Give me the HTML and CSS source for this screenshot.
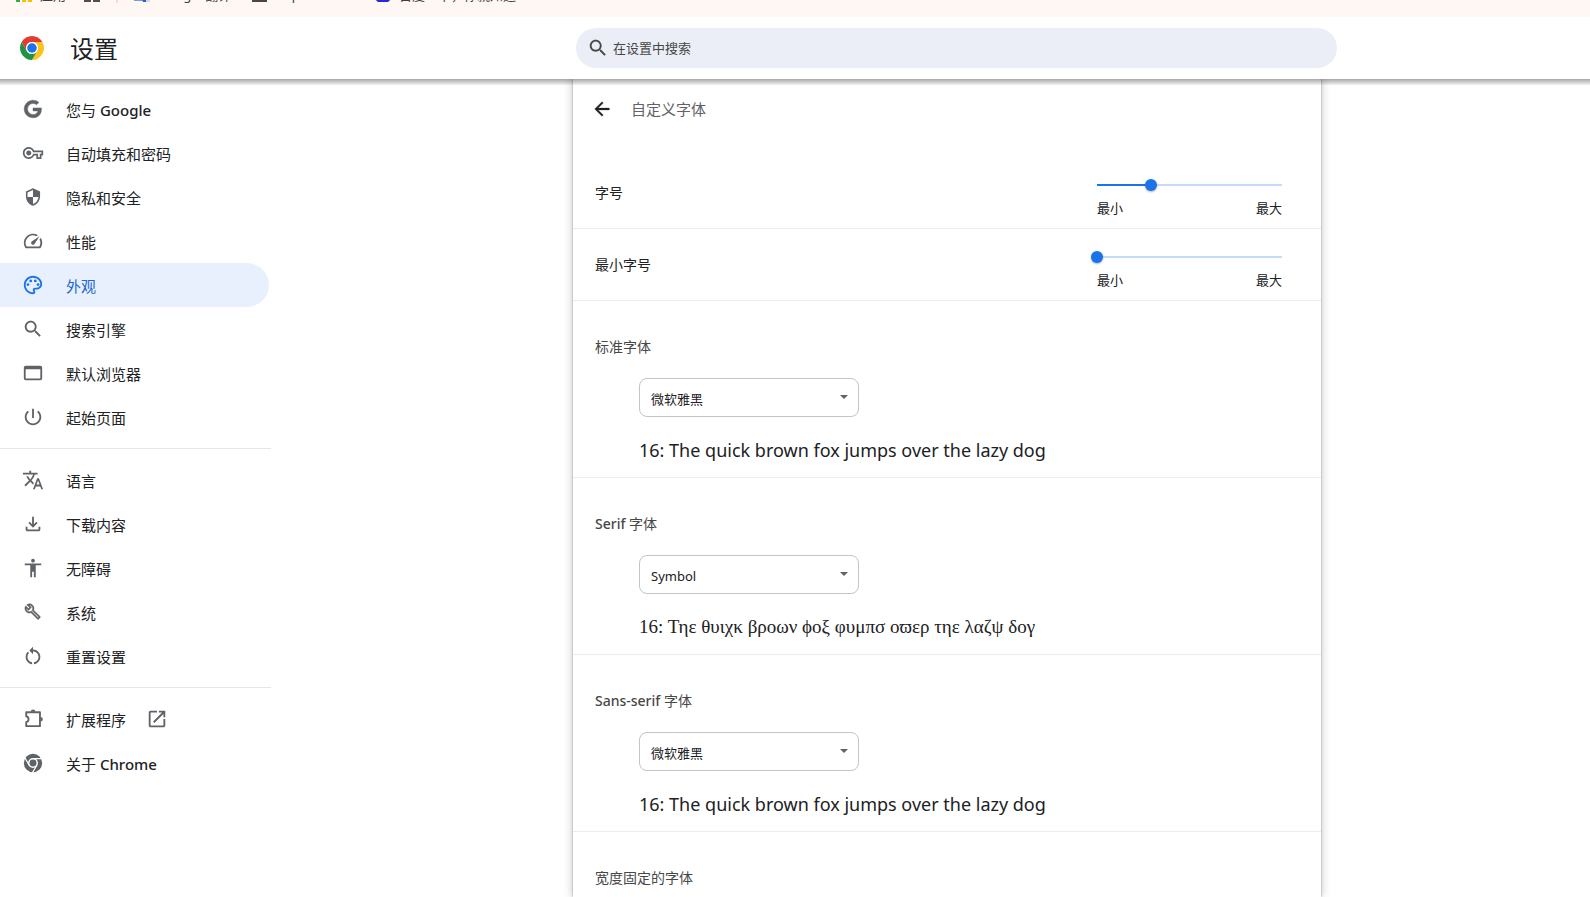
FILE: index.html
```html
<!DOCTYPE html>
<html lang="zh-CN">
<head>
<meta charset="utf-8">
<meta name="viewport" content="width=device-width, initial-scale=1">
<title>设置 - 自定义字体</title>
<link rel="stylesheet" href="styles.css">
</head>
<body>
<div class="bookmarks">
  <a class="bookmark" href="#apps"><svg class="bm-icon" viewBox="0 0 16 16"><path fill="#ea4335" d="M0 0h4v4H0zM6 0h4v4H6zM12 0h4v4h-4z"/><path fill="#4285f4" d="M0 6h4v4H0zM6 6h4v4H6z"/><path fill="#34a853" d="M0 12h4v4H0z"/><path fill="#fbbc04" d="M6 12h4v4H6zM12 12h4v4h-4z"/></svg>应用</a>
  <a class="bookmark bm-grid" href="#groups" aria-label="标签页分组"><svg class="bm-icon" viewBox="0 0 16 16"><path fill="none" stroke="#5b4b43" stroke-width="2" d="M1 1h5v5H1zM10 1h5v5h-5zM1 10h5v5H1zM10 10h5v5h-5z"/></svg></a>
  <span class="bm-rule"></span>
  <a class="bookmark bm-translate" href="#translate"><svg class="bm-icon" viewBox="0 0 16 16"><path fill="#d6d8dc" d="M6 4h10v12H9z"/><path fill="#6f9df2" d="M0 0h9l3 15H0z"/><path fill="#2b5fd0" d="M8 13h4v3H9z"/></svg>Google 翻译</a>
  <a class="bookmark bm-folder" href="#imported"><svg class="bm-icon" viewBox="0 0 16 16"><path fill="none" stroke="#474747" stroke-width="2" d="M2 3h5l2 2h6v10H2z"/></svg>Imported</a>
  <a class="bookmark bm-baidu" href="#baidu"><svg class="bm-icon" viewBox="0 0 16 16"><path fill="#2529d8" d="M8 7c4 0 7 4 7 6 0 3-4 4-7 3-3 1-7 0-7-3 0-2 3-6 7-6z"/><path fill="#fff" d="M4 12h3v2H4zM9 12h3v2H9z"/></svg>百度一下，你就知道</a>
</div>

<header class="topbar">
  <div class="brand">
    <svg class="logo" viewBox="0 0 48 48" aria-hidden="true"><path fill="#e33b2e" d="M24 12h20.78A24 24 0 0 0 3.22 12l10.39 18A12 12 0 0 1 24 12z"/><path fill="#fcc31e" d="M24 12h20.78A24 24 0 0 1 24 48l10.39-18A12 12 0 0 0 24 12z"/><path fill="#229342" d="M13.61 30L3.22 12A24 24 0 0 0 24 48l10.39-18A12 12 0 0 1 13.61 30z"/><circle cx="24" cy="24" r="12" fill="#fff"/><circle cx="24" cy="24" r="9.5" fill="#1a73e8"/></svg>
    <h1 class="title">设置</h1>
  </div>
  <div class="search-area">
    <label class="search">
      <svg class="icon" viewBox="0 0 24 24" aria-hidden="true"><path d="M15.5 14h-.79l-.28-.27C15.41 12.59 16 11.11 16 9.5 16 5.91 13.09 3 9.5 3S3 5.91 3 9.5 5.91 16 9.5 16c1.61 0 3.09-.59 4.23-1.57l.27.28v.79l5 4.99L20.49 19l-4.99-5zm-6 0C7.01 14 5 11.99 5 9.5S7.01 5 9.5 5 14 7.01 14 9.5 11.99 14 9.5 14z"/></svg>
      <input class="search-input" type="search" placeholder="在设置中搜索" aria-label="在设置中搜索">
    </label>
  </div>
</header>

<div class="page">
  <nav class="sidebar" aria-label="设置">
    <a class="nav-item" href="#people"><svg class="icon" viewBox="-1 -1 20 20"><path d="M16.58 8H9v2.75h4.47c-.24 1.2-1.42 3.27-4.47 3.27-2.72 0-4.93-2.25-4.93-5.02S6.28 3.98 9 3.98c1.54 0 2.57.66 3.17 1.22l2.19-2.12C12.97 1.79 11.16 1 9 1 4.58 1 1 4.58 1 9s3.58 8 8 8c4.62 0 7.68-3.25 7.68-7.82 0-.46-.04-.83-.1-1.18z" stroke="#5f6368" stroke-width=".4"/></svg><span>您与 <span class="latin">Google</span></span></a>
    <a class="nav-item" href="#autofill"><svg class="icon" viewBox="-1 -1 26 26"><path d="M22 19h-6v-4h-2.68c-1.14 2.42-3.6 4-6.32 4-3.86 0-7-3.14-7-7s3.14-7 7-7c2.72 0 5.17 1.58 6.32 4H24v6h-2v4zm-4-2h2v-4h2v-2H11.94l-.23-.67C11.01 8.34 9.11 7 7 7c-2.76 0-5 2.24-5 5s2.24 5 5 5c2.11 0 4.01-1.34 4.71-3.33l.23-.67H18v4zM7 15c-1.65 0-3-1.35-3-3s1.35-3 3-3 3 1.35 3 3-1.35 3-3 3z"/></svg><span>自动填充和密码</span></a>
    <a class="nav-item" href="#privacy"><svg class="icon" viewBox="-2 -2 28 28"><path d="M12 1L3 5v6c0 5.55 3.84 10.74 9 12 5.16-1.26 9-6.45 9-12V5l-9-4zm0 10.99h7c-.53 4.12-3.28 7.79-7 8.94V12H5V6.3l7-3.11v8.8z"/></svg><span>隐私和安全</span></a>
    <a class="nav-item" href="#performance"><svg class="icon" viewBox="0 0 24 24"><path d="M20.38 8.57l-1.23 1.85a8 8 0 0 1-.22 7.58H5.07A8 8 0 0 1 15.58 6.85l1.85-1.23A10 10 0 0 0 3.35 19a2 2 0 0 0 1.72 1h13.85a2 2 0 0 0 1.74-1 10 10 0 0 0-.27-10.44zm-9.79 6.84a2 2 0 0 0 2.83 0l5.66-8.49-8.49 5.66a2 2 0 0 0 0 2.83z"/></svg><span>性能</span></a>
    <a class="nav-item selected" href="#appearance" aria-current="page"><svg class="icon" viewBox="0 0 24 24"><path d="M12 22C6.49 22 2 17.51 2 12S6.49 2 12 2s10 4.04 10 9c0 3.31-2.69 6-6 6h-1.77c-.28 0-.5.22-.5.5 0 .12.05.23.13.33.41.47.64 1.06.64 1.67A2.5 2.5 0 0 1 12 22zm0-18c-4.41 0-8 3.59-8 8s3.59 8 8 8c.28 0 .5-.22.5-.5a.54.54 0 0 0-.14-.35c-.41-.46-.63-1.05-.63-1.65a2.5 2.5 0 0 1 2.5-2.5H16c2.21 0 4-1.79 4-4 0-3.86-3.59-7-8-7z"/><circle cx="6.5" cy="11.5" r="1.5"/><circle cx="9.5" cy="7.5" r="1.5"/><circle cx="14.5" cy="7.5" r="1.5"/><circle cx="17.5" cy="11.5" r="1.5"/></svg><span>外观</span></a>
    <a class="nav-item" href="#search"><svg class="icon" viewBox="0 0 24 24"><path d="M15.5 14h-.79l-.28-.27C15.41 12.59 16 11.11 16 9.5 16 5.91 13.09 3 9.5 3S3 5.91 3 9.5 5.91 16 9.5 16c1.61 0 3.09-.59 4.23-1.57l.27.28v.79l5 4.99L20.49 19l-4.99-5zm-6 0C7.01 14 5 11.99 5 9.5S7.01 5 9.5 5 14 7.01 14 9.5 11.99 14 9.5 14z"/></svg><span>搜索引擎</span></a>
    <a class="nav-item" href="#browser"><svg class="icon" viewBox="0 0 24 24"><path fill-rule="evenodd" d="M4 4h16a2 2 0 0 1 2 2v12a2 2 0 0 1-2 2H4a2 2 0 0 1-2-2V6a2 2 0 0 1 2-2zm0 4v10h16V8z"/></svg><span>默认浏览器</span></a>
    <a class="nav-item" href="#startup"><svg class="icon" viewBox="0 0 24 24"><path d="M13 3h-2v10h2V3zm4.83 2.17l-1.42 1.42C17.99 7.86 19 9.81 19 12c0 3.87-3.13 7-7 7s-7-3.13-7-7c0-2.19 1.01-4.14 2.58-5.42L6.17 5.17C4.23 6.82 3 9.26 3 12c0 4.97 4.03 9 9 9s9-4.03 9-9c0-2.74-1.23-5.18-3.17-6.83z"/></svg><span>起始页面</span></a>
    <hr class="nav-rule">
    <a class="nav-item" href="#languages"><svg class="icon" viewBox="0 0 24 24"><path d="M12.87 15.07l-2.54-2.51.03-.03c1.74-1.94 2.98-4.17 3.71-6.53H17V4h-7V2H8v2H1v1.99h11.17C11.5 7.92 10.44 9.75 9 11.35 8.07 10.32 7.3 9.19 6.69 8h-2c.73 1.63 1.73 3.17 2.98 4.56l-5.09 5.02L4 19l5-5 3.11 3.11.76-2.04zM18.5 10h-2L12 22h2l1.12-3h4.75L21 22h2l-4.5-12zm-2.62 7l1.62-4.33L19.12 17h-3.24z"/></svg><span>语言</span></a>
    <a class="nav-item" href="#downloads"><svg class="icon" viewBox="0 0 24 24"><path d="M12 16l-5-5 1.4-1.45 2.6 2.6V4h2v8.15l2.6-2.6L17 11zM6 20q-.825 0-1.412-.587T4 18v-3h2v3h12v-3h2v3q0 .825-.587 1.413T18 20z"/></svg><span>下载内容</span></a>
    <a class="nav-item" href="#accessibility"><svg class="icon" viewBox="0 0 24 24"><path d="M12 2c1.1 0 2 .9 2 2s-.9 2-2 2-2-.9-2-2 .9-2 2-2zm9 7h-6v13h-2v-6h-2v6H9V9H3V7h18v2z"/></svg><span>无障碍</span></a>
    <a class="nav-item" href="#system"><svg class="icon" viewBox="-3 -3 31 31"><path d="M22.61 18.99l-9.08-9.08c.93-2.34.45-5.1-1.44-7C9.79.61 6.21.4 3.66 2.26L7.5 6.11 6.08 7.52 2.25 3.69C.39 6.23.6 9.82 2.9 12.11c1.86 1.86 4.57 2.35 6.89 1.48l9.11 9.11c.39.39 1.02.39 1.41 0l2.3-2.3c.4-.38.4-1.01 0-1.41zm-3 1.6l-9.46-9.46c-.61.45-1.29.72-2 .82-1.36.2-2.79-.21-3.83-1.25C3.37 9.76 2.93 8.5 3 7.26l3.09 3.09 4.24-4.24-3.09-3.09c1.24-.07 2.49.37 3.44 1.31 1.08 1.08 1.49 2.57 1.24 3.96-.12.71-.42 1.37-.88 1.96l9.45 9.45-.88.89z" stroke="#5f6368" stroke-width=".6"/></svg><span>系统</span></a>
    <a class="nav-item" href="#reset"><svg class="icon" viewBox="0 0 24 24"><path d="M12 5V2L8 6l4 4V7c3.31 0 6 2.69 6 6 0 2.97-2.17 5.43-5 5.91v2.02c3.95-.49 7-3.85 7-7.93 0-4.42-3.58-8-8-8zM6 13c0-1.65.67-3.15 1.76-4.24L6.34 7.34C4.9 8.79 4 10.79 4 13c0 4.08 3.05 7.44 7 7.93v-2.02c-2.83-.48-5-2.94-5-5.91z"/></svg><span>重置设置</span></a>
    <hr class="nav-rule">
    <a class="nav-item" href="#extensions"><svg class="icon" viewBox="0 0 24 24"><path fill="none" stroke="#5f6368" stroke-width="2" stroke-linejoin="round" d="M4.6 4.6h15v15.2h-15v-4.4c3.4-.8 3.4-5.6 0-6.4z"/><path d="M9.6 4a2.5 2.5 0 0 1 5 0zM20.2 9.8a2.5 2.5 0 0 1 0 5z"/></svg><span>扩展程序</span><svg class="icon launch" viewBox="0 0 24 24"><path d="M19 19H5V5h7V3H5c-1.11 0-2 .9-2 2v14c0 1.1.89 2 2 2h14c1.1 0 2-.9 2-2v-7h-2v7zM14 3v2h3.59l-9.83 9.83 1.41 1.41L19 6.41V10h2V3h-7z"/></svg></a>
    <a class="nav-item" href="#about"><svg class="icon" viewBox="0 0 24 24"><circle cx="12" cy="12" r="10"/><circle cx="12" cy="12" r="5.4" fill="#fff"/><path fill="none" stroke="#fff" stroke-width="1.3" d="M12 7.2h10M16.16 14.4l-5 8.66M7.84 14.4l-5-8.66"/><circle cx="12" cy="12" r="3.8"/></svg><span>关于 <span class="latin">Chrome</span></span></a>
  </nav>

  <main class="content">
    <div class="card">
      <div class="card-head">
        <button class="back" type="button" aria-label="返回"><svg class="icon" viewBox="0 0 24 24"><path d="M20 11H7.83l5.59-5.59L12 4l-8 8 8 8 1.41-1.41L7.83 13H20v-2z" stroke="#202124" stroke-width=".3"/></svg></button>
        <h2 class="card-title">自定义字体</h2>
      </div>

      <div class="row">
        <label class="row-label" for="size">字号</label>
        <div class="slider">
          <input class="range" id="size" type="range" min="0" max="100" value="29" style="--value: 0.29">
          <div class="slider-ends"><span>最小</span><span>最大</span></div>
        </div>
      </div>
      <div class="row">
        <label class="row-label" for="min-size">最小字号</label>
        <div class="slider">
          <input class="range" id="min-size" type="range" min="0" max="100" value="0" style="--value: 0">
          <div class="slider-ends"><span>最小</span><span>最大</span></div>
        </div>
      </div>

      <section class="font-block">
        <label class="font-label" for="standard">标准字体</label>
        <div class="select-wrap"><select class="select" id="standard"><option>微软雅黑</option></select><svg class="caret" viewBox="0 0 8 4"><path d="M0 0h8L4 4z"/></svg></div>
        <p class="sample">16: The quick brown fox jumps over the lazy dog</p>
      </section>
      <section class="font-block">
        <label class="font-label" for="serif"><span class="latin">Serif</span> 字体</label>
        <div class="select-wrap"><select class="select" id="serif"><option>Symbol</option></select><svg class="caret" viewBox="0 0 8 4"><path d="M0 0h8L4 4z"/></svg></div>
        <p class="sample greek">16: Τηε θυιχκ βροων ϕοξ φυμπσ οϖερ τηε λαζψ δογ</p>
      </section>
      <section class="font-block">
        <label class="font-label" for="sans"><span class="latin">Sans-serif</span> 字体</label>
        <div class="select-wrap"><select class="select" id="sans"><option>微软雅黑</option></select><svg class="caret" viewBox="0 0 8 4"><path d="M0 0h8L4 4z"/></svg></div>
        <p class="sample">16: The quick brown fox jumps over the lazy dog</p>
      </section>
      <section class="font-block last">
        <h3 class="font-label">宽度固定的字体</h3>
      </section>
    </div>
  </main>
</div>
</body>
</html>
```

FILE: styles.css
```css
* {
  box-sizing: border-box;
}

body {
  margin: 0;
  min-height: 100vh;
  display: flex;
  flex-direction: column;
  background: #fff;
  color: #202124;
  font-family: "Noto Sans", "Noto Sans CJK SC", sans-serif;
  font-size: 15px;
}

.icon {
  width: 22px;
  height: 22px;
  flex: none;
  display: block;
  fill: #5f6368;
}

.latin {
  font-weight: 500;
}

/* Bookmarks bar, scrolled mostly out of view */
.bookmarks {
  flex: none;
  height: 17px;
  padding: 0 16px 13px;
  display: flex;
  align-items: flex-end;
  overflow: hidden;
  background: #fff7f4;
}

.bookmark {
  display: flex;
  align-items: flex-end;
  gap: 8px;
  color: #4a3a34;
  font-size: 13px;
  line-height: 18px;
  text-decoration: none;
  white-space: nowrap;
}

.bm-icon {
  width: 16px;
  height: 16px;
  flex: none;
  margin-bottom: 2px;
}

.bm-grid {
  margin-left: 18px;
}

.bm-rule {
  width: 2px;
  height: 16px;
  margin: 0 16px 1px;
  background: #ffd9c8;
}

.bm-folder {
  margin-left: 20px;
}

.bm-baidu {
  margin-left: 42px;
}

/* Top bar */
.topbar {
  position: relative;
  z-index: 1;
  flex: none;
  height: 62px;
  display: flex;
  align-items: center;
  background: #fff;
}

.topbar::after {
  content: "";
  position: absolute;
  top: 100%;
  left: 0;
  right: 0;
  height: 6px;
  background: linear-gradient(rgba(0, 0, 0, 0.34), rgba(0, 0, 0, 0.05));
  pointer-events: none;
}

.brand {
  flex: 0 0 323px;
  padding-left: 20px;
  display: flex;
  align-items: center;
  gap: 26px;
}

.logo {
  width: 24px;
  height: 24px;
}

.title {
  margin: 0;
  padding-top: 2px;
  font-size: 24px;
  font-weight: 400;
  line-height: 32px;
}

.search-area {
  flex: 1;
  display: flex;
  justify-content: center;
}

.search {
  flex: 0 1 761px;
  height: 40px;
  padding: 0 11px;
  display: flex;
  align-items: center;
  gap: 4px;
  border-radius: 20px;
  background: #ebeef7;
}

.search .icon {
  fill: #474747;
}

.search-input {
  flex: 1;
  min-width: 0;
  padding: 0;
  border: 0;
  outline: 0;
  background: none;
  color: #202124;
  font: inherit;
  font-size: 13px;
}

.search-input::placeholder {
  color: #474747;
  opacity: 1;
}

/* Page body */
.page {
  flex: 1;
  display: flex;
}

.sidebar {
  flex: 0 0 304px;
  padding: 8px 33px 0 0;
}

.nav-item {
  height: 44px;
  margin-right: 2px;
  padding-left: 22px;
  display: flex;
  align-items: center;
  gap: 22px;
  border-radius: 0 22px 22px 0;
  color: #202124;
  text-decoration: none;
}

.nav-item.selected {
  background: #e8f0fe;
  color: #1967d2;
}

.nav-item.selected .icon {
  fill: #1a73e8;
}

.nav-item .launch {
  margin-left: -2px;
}

.nav-rule {
  height: 1px;
  margin: 9px 0;
  border: 0;
  background: #e6e6e6;
}

.content {
  flex: 1;
  display: flex;
  justify-content: center;
}

.card {
  flex: 0 1 748px;
  background: #fff;
  box-shadow: 0 0 2px rgba(60, 64, 67, 0.5), 0 -2px 8px 2px rgba(60, 64, 67, 0.2);
  clip-path: inset(0 -12px);
}

.card-head {
  height: 78px;
  padding: 19px 18px 0;
  display: flex;
  align-items: flex-start;
  gap: 18px;
}

.back {
  padding: 0;
  border: 0;
  background: none;
}

.back .icon {
  fill: #202124;
}

.card-title {
  margin: 0;
  color: #5f6368;
  font-size: 15px;
  font-weight: 400;
  line-height: 22px;
}

.row {
  min-height: 72px;
  padding: 0 39px 0 22px;
  display: flex;
  align-items: center;
  justify-content: space-between;
  border-bottom: 1px solid #ececec;
}

.row-label {
  font-size: 14px;
  line-height: 20px;
}

.slider {
  flex: 0 0 185px;
  padding-top: 9px;
}

/* The input reaches half a thumb past the track at both ends */
.range {
  --fill: calc(var(--value) * (100% - 12px));
  -webkit-appearance: none;
  appearance: none;
  display: block;
  width: calc(100% + 12px);
  height: 16px;
  margin: 0 -6px 5px;
  background:
    linear-gradient(#1a73e8, #1a73e8) 6px center / var(--fill) 2px no-repeat,
    linear-gradient(#c6dafc, #c6dafc) center / calc(100% - 12px) 2px no-repeat;
}

.range::-webkit-slider-thumb {
  -webkit-appearance: none;
  width: 12px;
  height: 12px;
  border: 0;
  border-radius: 50%;
  background: #1a73e8;
  box-shadow: 0 1px 2px rgba(0, 0, 0, 0.3);
}

.slider-ends {
  display: flex;
  justify-content: space-between;
  font-size: 13px;
  line-height: 20px;
}

.font-block {
  padding: 34px 22px 14px;
  border-bottom: 1px solid #ececec;
}

.font-block.last {
  padding-bottom: 0;
  border-bottom: 0;
}

.font-label {
  display: block;
  margin: 0;
  color: #474747;
  font-size: 14px;
  font-weight: 400;
  line-height: 24px;
}

.select-wrap {
  position: relative;
  width: 220px;
  margin: 19px 0 0 44px;
}

.select {
  -webkit-appearance: none;
  appearance: none;
  display: block;
  width: 100%;
  height: 39px;
  padding: 2px 32px 0 11px;
  border: 1px solid #c4c4c4;
  border-radius: 8px;
  background: #fff;
  color: #202124;
  font: inherit;
  font-size: 13px;
}

.caret {
  position: absolute;
  top: 17px;
  right: 11px;
  width: 8px;
  height: 4px;
  fill: #5f6368;
  pointer-events: none;
}

.sample {
  margin: 20px 0 0 44px;
  font-family: "Noto Sans", sans-serif;
  font-size: 18px;
  line-height: 26px;
}

.sample.greek {
  font-family: "Liberation Serif", serif;
  font-size: 19px;
}
```
